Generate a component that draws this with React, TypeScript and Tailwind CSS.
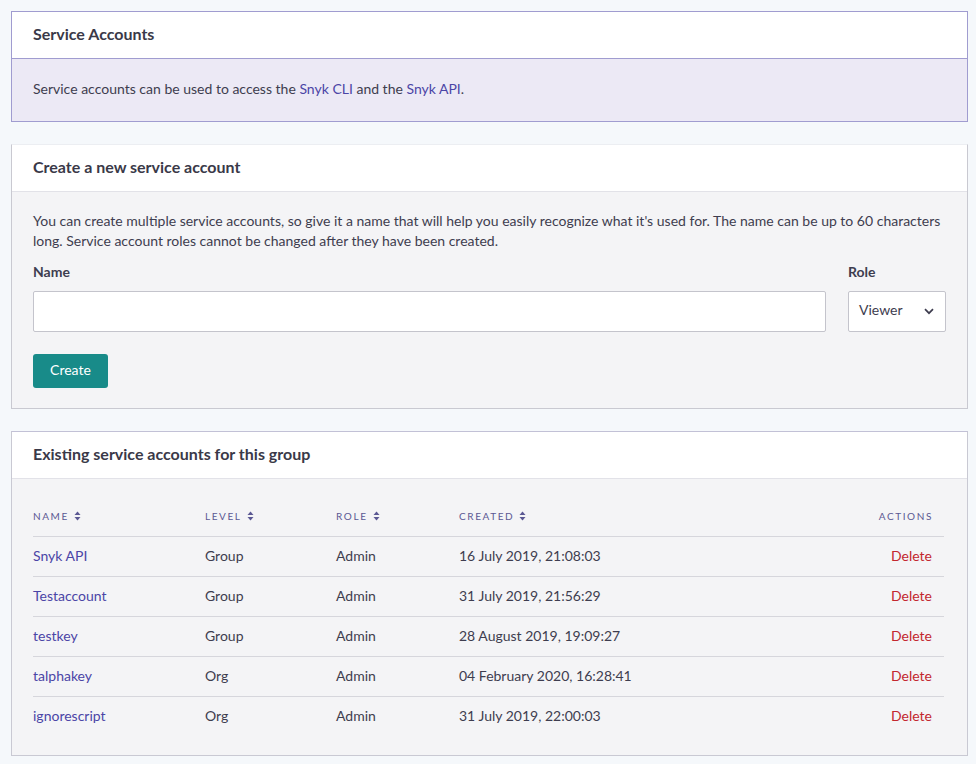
import React from "react";

const SortIcon = () => (
  <svg width="7" height="10" viewBox="0 0 7 10" className="inline-block ml-[5px] -mt-[2px]">
    <path d="M3.5 0.5 L6.5 4 L0.5 4 Z" fill="#5b5893" />
    <path d="M3.5 9.5 L6.5 6 L0.5 6 Z" fill="#5b5893" />
  </svg>
);

const rows = [
  { name: "Snyk API", level: "Group", role: "Admin", created: "16 July 2019, 21:08:03" },
  { name: "Testaccount", level: "Group", role: "Admin", created: "31 July 2019, 21:56:29" },
  { name: "testkey", level: "Group", role: "Admin", created: "28 August 2019, 19:09:27" },
  { name: "talphakey", level: "Org", role: "Admin", created: "04 February 2020, 16:28:41" },
  { name: "ignorescript", level: "Org", role: "Admin", created: "31 July 2019, 22:00:03" },
];

export default function App() {
  return (
    <div
      className="min-h-[764px] bg-[#f5f8fb] pt-[11px] pl-[11px] text-[14px] text-[#3e3d4f]"
      style={{ fontFamily: "Lato, 'Open Sans', sans-serif" }}
    >
      <div className="w-[957px] flex flex-col gap-[22px]">
        {/* Card 1 */}
        <div className="border border-[#a09cd0] bg-white">
          <div className="h-[46px] flex items-center px-[21px] pb-[2px] font-bold text-[16px] text-[#3a3948]">
            Service Accounts
          </div>
          <div className="h-[63px] border-t border-[#a09cd0] bg-[#ece9f5] flex items-center px-[21px] pb-[3px]">
            <span>
              Service accounts can be used to access the <a className="text-[#4b45a6]">Snyk CLI</a> and the{" "}
              <a className="text-[#4b45a6]">Snyk API</a>.
            </span>
          </div>
        </div>

        {/* Card 2 */}
        <div className="border border-[#c9c9d1] border-t-[#eceef2] bg-white">
          <div className="h-[46px] flex items-center px-[21px] pb-[2px] font-bold text-[16px] text-[#3a3948]">
            Create a new service account
          </div>
          <div className="border-t border-[#e2e2e8] bg-[#f4f4f6] px-[21px] pt-[19px] pb-[20px]">
            <p className="leading-[20px]">
              You can create multiple service accounts, so give it a name that will help you easily recognize what it's
              used for. The name can be up to 60 characters long. Service account roles cannot be changed after they
              have been created.
            </p>
            <div className="flex gap-[22px] mt-[11px]">
              <div className="flex-1 flex flex-col">
                <label className="font-bold leading-[20px]">Name</label>
                <input className="mt-[9px] h-[41px] bg-white border border-[#c4c4cc] rounded-[2px] outline-none px-3" />
              </div>
              <div className="w-[98px] flex flex-col">
                <label className="font-bold leading-[20px]">Role</label>
                <div className="mt-[9px] h-[41px] bg-white border border-[#c4c4cc] rounded-[2px] flex items-center justify-between pl-[10px] pr-[11px]">
                  <span className="-mt-[4px]">Viewer</span>
                  <svg width="10" height="7" viewBox="0 0 10 7">
                    <path d="M1 1.2 L5 5.2 L9 1.2" stroke="#3e3d4f" strokeWidth="1.7" fill="none" />
                  </svg>
                </div>
              </div>
            </div>
            <button className="mt-[22px] w-[75px] h-[34px] rounded-[3px] bg-[#188b89] text-white text-[14px] flex items-center justify-center pb-[4px]">
              Create
            </button>
          </div>
        </div>

        {/* Card 3 */}
        <div className="border border-[#c9c9d3] border-t-[#c2c1d6] bg-white">
          <div className="h-[46px] flex items-center px-[21px] pb-[2px] font-bold text-[16px] text-[#3a3948]">
            Existing service accounts for this group
          </div>
          <div className="border-t border-[#e2e2e8] bg-[#f4f4f6] px-[21px] pt-[17px] pb-[19px]">
            <div className="w-[911px]">
              <div className="h-[40px] flex items-center text-[10px] tracking-[1.6px] text-[#5b5893] uppercase">
                <div className="w-[172px]">
                  Name
                  <SortIcon />
                </div>
                <div className="w-[131px]">
                  Level
                  <SortIcon />
                </div>
                <div className="w-[123px]">
                  Role
                  <SortIcon />
                </div>
                <div className="flex-1">
                  Created
                  <SortIcon />
                </div>
                <div className="pr-[11px]">Actions</div>
              </div>
              {rows.map((r) => (
                <div key={r.name} className="h-[40px] border-t border-[#d6d6dc] flex items-center pb-[3px]">
                  <div className="w-[172px] text-[#4b45a6]">{r.name}</div>
                  <div className="w-[131px]">{r.level}</div>
                  <div className="w-[123px]">{r.role}</div>
                  <div className="flex-1">{r.created}</div>
                  <div className="pr-[12px] text-[#c3262e]">Delete</div>
                </div>
              ))}
            </div>
          </div>
        </div>
      </div>
    </div>
  );
}
